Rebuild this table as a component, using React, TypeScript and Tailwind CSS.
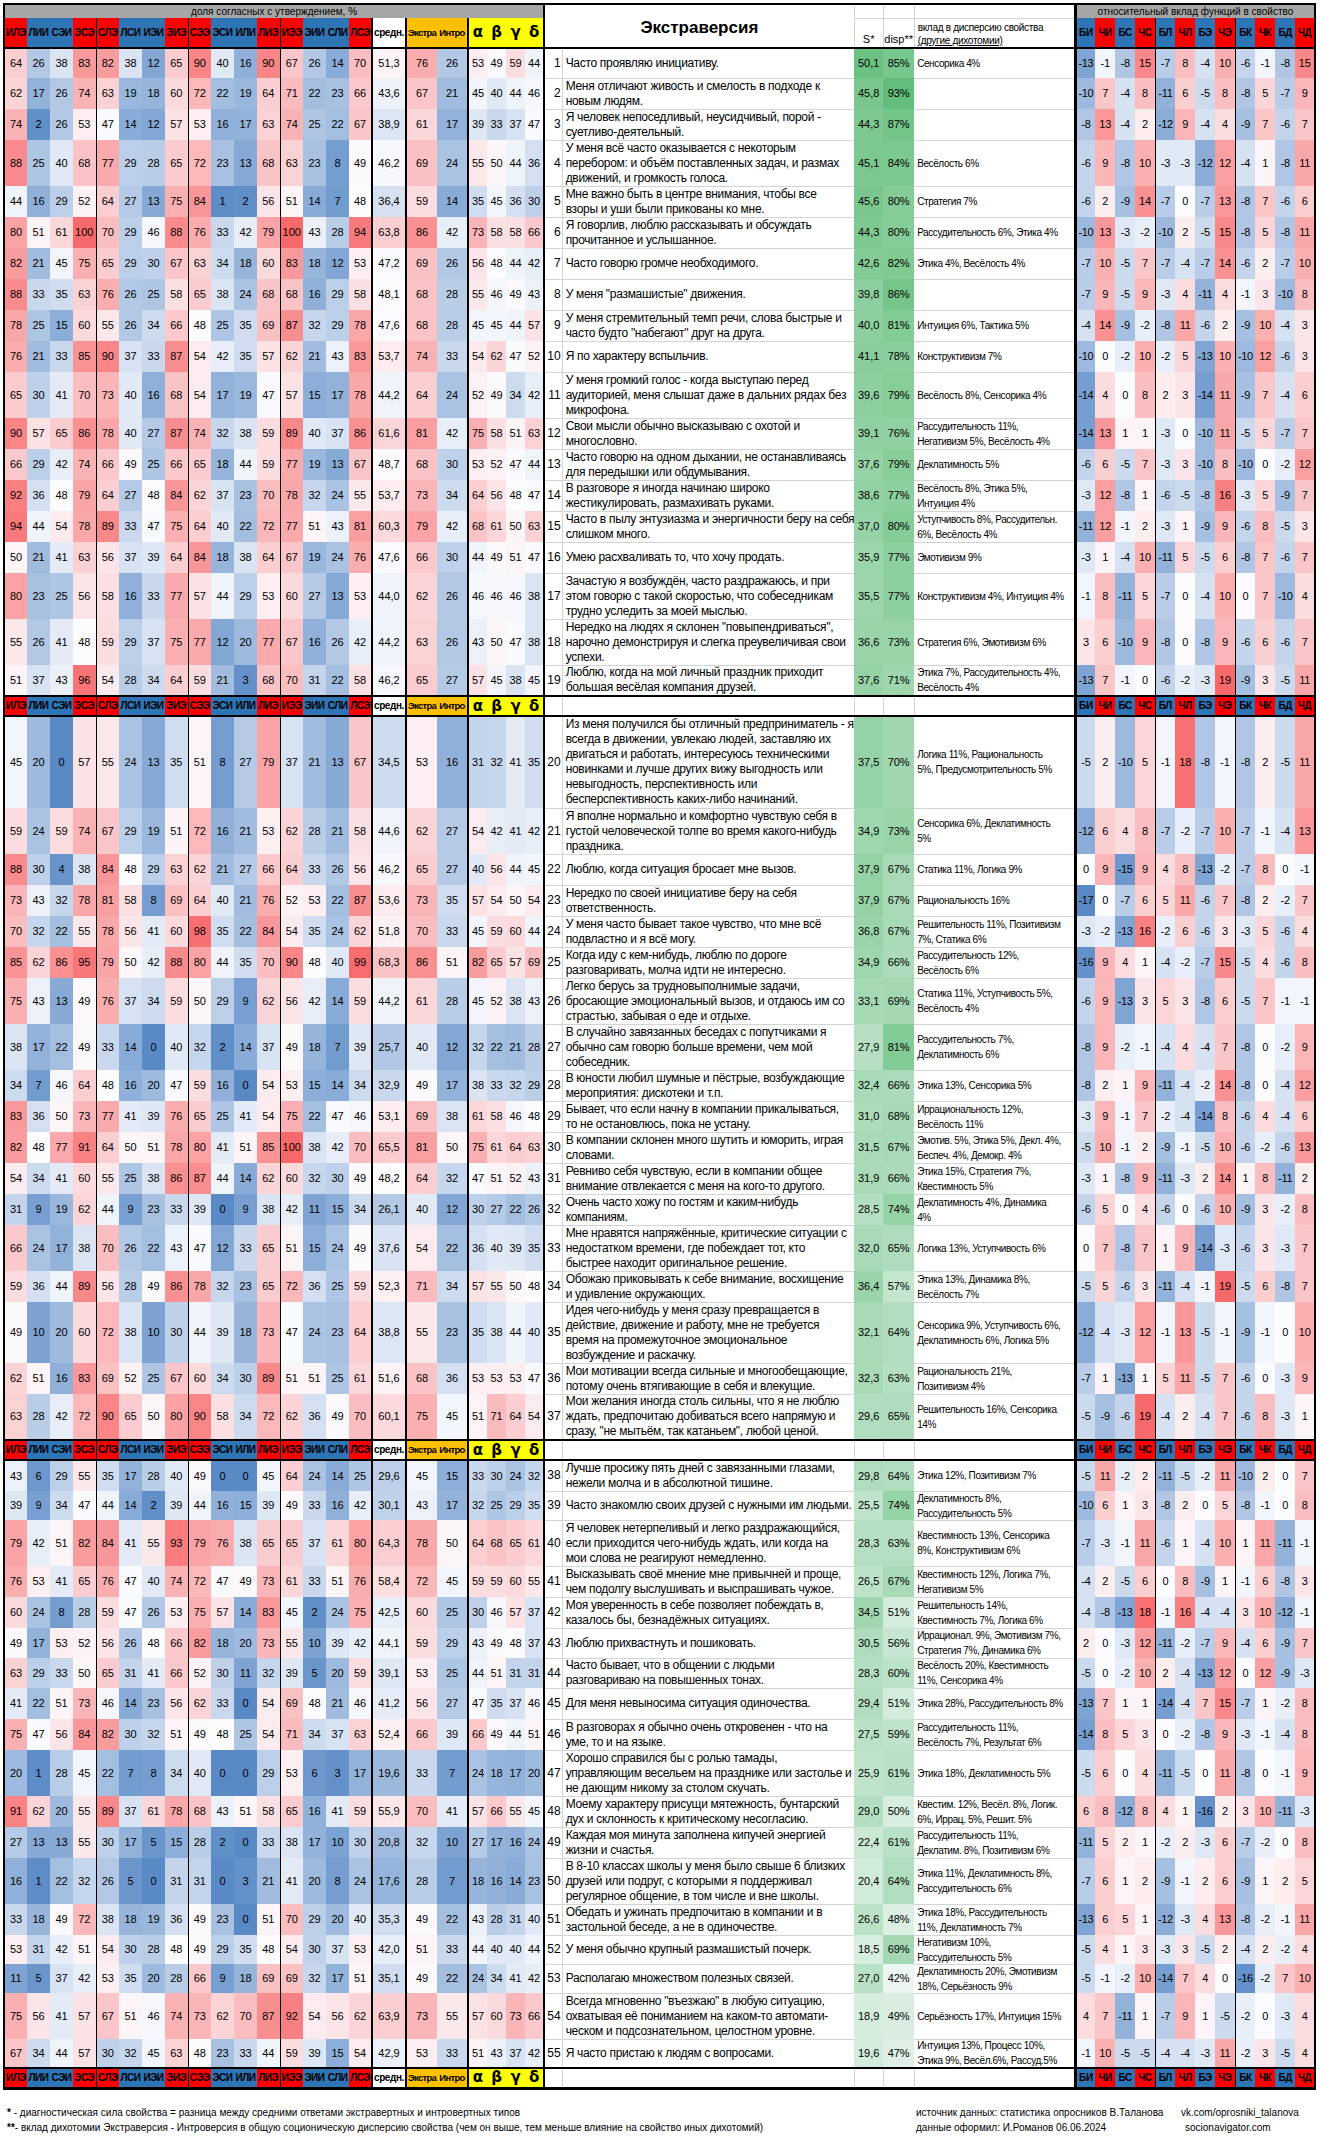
import React from 'react';

type Row = [number, string, string, string, string, string, string, string?];

const S1: Row[] = [
  [1, '64 26 38 83 82 38 12 65 90 40 16 90 67 26 14 70 51,3 76 26 53 49 59 44', 'Часто проявляю инициативу.', '50,1', '85%', 'Сенсорика 4%', '-13 -1 -8 15 -7 8 -4 10 -6 -1 -8 15', 'h-[30px]'],
  [2, '62 17 26 74 63 19 18 60 72 22 19 64 71 22 23 66 43,6 67 21 45 40 44 46', 'Меня отличают живость и смелость в подходе к|новым людям.', '45,8', '93%', '', '-10 7 -4 8 -11 6 -5 8 -8 5 -7 9'],
  [3, '74 2 26 53 47 14 12 57 53 16 17 63 74 25 22 67 38,9 61 17 39 33 37 47', 'Я человек непоседливый, неусидчивый, порой -|суетливо-деятельный.', '44,3', '87%', '', '-8 13 -4 2 -12 9 -4 4 -9 7 -6 7'],
  [4, '88 25 40 68 77 29 28 65 72 23 13 68 63 23 8 49 46,2 69 24 55 50 44 36', 'У меня всё часто оказывается с некоторым|перебором: и объём поставленных задач, и размах|движений, и громкость голоса.', '45,1', '84%', 'Весёлость 6%', '-6 9 -8 10 -3 -3 -12 12 -4 1 -8 11'],
  [5, '44 16 29 52 64 27 13 75 84 1 2 56 51 14 7 48 36,4 59 14 35 45 36 30', 'Мне важно быть в центре внимания, чтобы все|взоры и уши были прикованы ко мне.', '45,6', '80%', 'Стратегия 7%', '-6 2 -9 14 -7 0 -7 13 -8 7 -6 6'],
  [6, '80 51 61 100 70 29 46 88 76 33 42 79 100 43 28 94 63,8 86 42 73 58 58 66', 'Я говорлив, люблю рассказывать и обсуждать|прочитанное и услышанное.', '44,3', '80%', 'Рассудительность 6%, Этика 4%', '-10 13 -3 -2 -10 2 -5 15 -8 5 -8 11'],
  [7, '82 21 45 75 65 29 30 67 63 34 18 60 83 18 12 53 47,2 69 26 56 48 44 42', 'Часто говорю громче необходимого.', '42,6', '82%', 'Этика 4%, Весёлость 4%', '-7 10 -5 7 -7 -4 -7 14 -6 2 -7 10'],
  [8, '88 33 35 63 76 26 25 58 65 38 24 68 68 16 29 58 48,1 68 28 55 46 49 43', 'У меня "размашистые" движения.', '39,8', '86%', '', '-7 9 -5 9 -3 4 -11 4 -1 3 -10 8'],
  [9, '78 25 15 60 55 26 34 66 48 25 35 69 87 32 29 78 47,6 68 28 45 45 44 57', 'У меня стремительный темп речи, слова быстрые и|часто будто "набегают" друг на друга.', '40,0', '81%', 'Интуиция 6%, Тактика 5%', '-4 14 -9 -2 -8 11 -6 2 -9 10 -4 3'],
  [10, '76 21 33 85 90 37 33 87 54 42 35 57 62 21 43 83 53,7 74 33 54 62 47 52', 'Я по характеру вспыльчив.', '41,1', '78%', 'Конструктивизм 7%', '-10 0 -2 10 -2 5 -13 10 -10 12 -6 3'],
  [11, '65 30 41 70 73 40 16 68 54 17 19 47 57 15 17 78 44,2 64 24 52 49 34 42', 'У меня громкий голос - когда выступаю перед|аудиторией, меня слышат даже в дальних рядах без|микрофона.', '39,6', '79%', 'Весёлость 8%, Сенсорика 4%', '-14 4 0 8 2 3 -14 11 -9 7 -4 6'],
  [12, '90 57 65 86 78 40 27 87 74 32 38 59 89 40 37 86 61,6 81 42 75 58 51 63', 'Свои мысли обычно высказываю с охотой и|многословно.', '39,1', '76%', 'Рассудительность 11%,|Негативизм 5%, Весёлость 4%', '-14 13 1 1 -3 0 -10 11 -5 5 -7 7'],
  [13, '66 29 42 74 66 49 25 66 65 18 44 59 77 19 13 67 48,7 68 30 53 52 47 44', 'Часто говорю на одном дыхании, не останавливаясь|для передышки или обдумывания.', '37,6', '79%', 'Деклатимность 5%', '-6 6 -5 7 -3 3 -10 8 -10 0 -2 12'],
  [14, '92 36 48 79 64 27 48 84 62 37 23 70 78 32 24 55 53,7 73 34 64 56 48 47', 'В разговоре я иногда начинаю широко|жестикулировать, размахивать руками.', '38,6', '77%', 'Весёлость 8%, Этика 5%,|Интуиция 4%', '-3 12 -8 1 -6 -5 -8 16 -3 5 -9 7'],
  [15, '94 44 54 78 89 33 47 75 64 40 22 72 77 51 43 81 60,3 79 42 68 61 50 63', 'Часто в пылу энтузиазма и энергичности беру на себя|слишком много.', '37,0', '80%', 'Уступчивость 8%, Рассудительн.|6%, Весёлость 4%', '-11 12 -1 2 -3 1 -9 9 -6 8 -5 3'],
  [16, '50 21 41 63 56 37 39 64 84 18 38 64 67 19 24 76 47,6 66 30 44 49 51 47', 'Умею расхваливать то, что хочу продать.', '35,9', '77%', 'Эмотивизм 9%', '-3 1 -4 10 -11 5 -5 6 -8 7 -6 7'],
  [17, '80 23 25 56 58 16 33 77 57 44 29 53 60 27 13 53 44,0 62 26 46 46 46 38', 'Зачастую я возбуждён, часто раздражаюсь, и при|этом говорю с такой скоростью, что собеседникам|трудно уследить за моей мыслью.', '35,5', '77%', 'Конструктивизм 4%, Интуиция 4%', '-1 8 -11 5 -7 0 -4 10 0 7 -10 4'],
  [18, '55 26 41 48 59 29 37 75 77 12 20 77 67 16 26 42 44,2 63 26 43 50 47 38', 'Нередко на людях я склонен "повыпендриваться",|нарочно демонстрируя и слегка преувеличивая свои|успехи.', '36,6', '73%', 'Стратегия 6%, Эмотивизм 6%', '3 6 -10 9 -8 0 -8 9 -6 6 -6 7'],
  [19, '51 37 43 96 54 28 34 64 59 21 3 68 70 31 22 58 46,2 65 27 57 45 38 45', 'Люблю, когда на мой личный праздник приходит|большая весёлая компания друзей.', '37,6', '71%', 'Этика 7%, Рассудительность 4%,|Весёлость 4%', '-13 7 -1 0 -6 -2 -3 19 -9 3 -5 11'],
];

const S2: Row[] = [
  [20, '45 20 0 57 55 24 13 35 51 8 27 79 37 21 13 67 34,5 53 16 31 32 41 35', 'Из меня получился бы отличный предприниматель - я|всегда в движении, увлекаю людей, заставляю их|двигаться и работать, интересуюсь техническими|новинками и лучше других вижу выгодность или|невыгодность, перспективность или|бесперспективность каких-либо начинаний.', '37,5', '70%', 'Логика 11%, Рациональность|5%, Предусмотрительность 5%', '-5 2 -10 5 -1 18 -8 -1 -8 2 -5 11'],
  [21, '59 24 59 74 67 29 19 51 72 16 21 53 62 28 21 58 44,6 62 27 54 42 41 42', 'Я вполне нормально и комфортно чувствую себя в|густой человеческой толпе во время какого-нибудь|праздника.', '34,9', '73%', 'Сенсорика 6%, Деклатимность|5%', '-12 6 4 8 -7 -2 -7 10 -7 -1 -4 13'],
  [22, '88 30 4 38 84 48 29 63 62 21 27 66 64 33 26 56 46,2 65 27 40 56 44 45', 'Люблю, когда ситуация бросает мне вызов.', '37,9', '67%', 'Статика 11%, Логика 9%', '0 9 -15 9 4 8 -13 -2 -7 8 0 -1'],
  [23, '73 43 32 78 81 58 8 69 64 40 21 76 52 53 22 87 53,6 73 35 57 54 50 54', 'Нередко по своей инициативе беру на себя|ответственность.', '37,9', '67%', 'Рациональность 16%', '-17 0 -7 6 5 11 -6 7 -8 2 -2 7'],
  [24, '70 32 22 55 78 56 41 60 98 35 22 84 54 35 24 62 51,8 70 33 45 59 60 44', 'У меня часто бывает такое чувство, что мне всё|подвластно и я всё могу.', '36,8', '67%', 'Решительность 11%, Позитивизм|7%, Статика 6%', '-3 -2 -13 16 -2 6 -6 3 -3 5 -6 4'],
  [25, '85 62 86 95 79 50 42 88 80 44 35 70 90 48 40 99 68,3 86 51 82 65 57 69', 'Когда иду с кем-нибудь, люблю по дороге|разговаривать, молча идти не интересно.', '34,9', '66%', 'Рассудительность 12%,|Весёлость 6%', '-16 9 4 1 -4 -2 -7 15 -5 4 -6 8'],
  [26, '75 43 13 49 76 37 34 59 50 29 9 62 56 42 14 59 44,2 61 28 45 52 38 43', 'Легко берусь за трудновыполнимые задачи,|бросающие эмоциональный вызов, и отдаюсь им со|страстью, забывая о еде и отдыхе.', '33,1', '69%', 'Статика 11%, Уступчивость 5%,|Весёлость 4%', '-6 9 -13 3 5 3 -8 6 -5 7 -1 -1'],
  [27, '38 17 22 49 33 14 0 40 32 2 14 37 49 18 7 39 25,7 40 12 32 22 21 28', 'В случайно завязанных беседах с попутчиками я|обычно сам говорю больше времени, чем мой|собеседник.', '27,9', '81%', 'Рассудительность 7%,|Деклатимность 6%', '-8 9 -2 -1 -4 4 -4 7 -8 0 -2 9'],
  [28, '34 7 46 64 48 16 20 47 59 16 0 54 53 15 14 34 32,9 49 17 38 33 32 29', 'В юности любил шумные и пёстрые, возбуждающие|мероприятия: дискотеки и т.п.', '32,4', '66%', 'Этика 13%, Сенсорика 5%', '-8 2 1 9 -11 -4 -2 14 -8 0 -4 12'],
  [29, '83 36 50 73 77 41 39 76 65 25 41 54 75 22 47 46 53,1 69 38 61 58 46 48', 'Бывает, что если начну в компании прикалываться,|то не остановлюсь, пока не устану.', '31,0', '68%', 'Иррациональность 12%,|Весёлость 11%', '-3 9 -1 7 -2 -4 -14 8 -6 4 -4 6'],
  [30, '82 48 77 91 64 50 51 78 80 41 51 85 100 38 42 70 65,5 81 50 75 61 64 63', 'В компании склонен много шутить и юморить, играя|словами.', '31,5', '67%', 'Эмотив. 5%, Этика 5%, Декл. 4%,|Беспеч. 4%, Демокр. 4%', '-5 10 -1 2 -9 -1 -5 10 -6 -2 -6 13'],
  [31, '54 34 41 60 55 25 38 86 87 44 14 62 60 32 30 49 48,2 64 32 47 51 52 43', 'Ревниво себя чувствую, если в компании общее|внимание отвлекается с меня на кого-то другого.', '31,9', '66%', 'Этика 15%, Стратегия 7%,|Квестимность 5%', '-3 1 -8 9 -11 -3 2 14 1 8 -11 2'],
  [32, '31 9 19 62 44 9 23 33 39 0 9 38 42 11 15 34 26,1 40 12 30 27 22 26', 'Очень часто хожу по гостям и каким-нибудь|компаниям.', '28,5', '74%', 'Деклатимность 4%, Динамика|4%', '-6 5 0 4 -6 0 -6 10 -9 3 -2 8'],
  [33, '66 24 17 38 70 26 22 43 47 12 33 65 51 15 24 49 37,6 54 22 36 40 39 35', 'Мне нравятся напряжённые, критические ситуации с|недостатком времени, где побеждает тот, кто|быстрее находит оригинальное решение.', '32,0', '65%', 'Логика 13%, Уступчивость 6%', '0 7 -8 7 1 9 -14 -3 -6 3 -3 7'],
  [34, '59 36 44 89 56 28 49 86 78 32 23 65 72 36 25 59 52,3 71 34 57 55 50 48', 'Обожаю приковывать к себе внимание, восхищение|и удивление окружающих.', '36,4', '57%', 'Этика 13%, Динамика 8%,|Весёлость 7%', '-5 5 -6 3 -11 -4 -1 19 -5 6 -8 7'],
  [35, '49 10 20 60 72 38 10 30 44 39 18 73 47 24 23 64 38,8 55 23 35 38 44 40', 'Идея чего-нибудь у меня сразу превращается в|действие, движение и работу, мне не требуется|время на промежуточное эмоциональное|возбуждение и раскачку.', '32,1', '64%', 'Сенсорика 9%, Уступчивость 6%,|Деклатимность 6%, Логика 5%', '-12 -4 -3 12 -1 13 -5 -1 -9 -1 0 10'],
  [36, '62 51 16 83 69 52 25 67 60 34 30 89 51 51 25 61 51,6 68 36 53 53 53 47', 'Мои мотивации всегда сильные и многообещающие,|потому очень втягивающие в себя и влекущие.', '32,3', '63%', 'Рациональность 21%,|Позитивизм 4%', '-7 1 -13 1 5 11 -5 7 -6 0 -3 9'],
  [37, '63 28 42 72 90 65 50 80 90 58 34 72 62 36 49 70 60,1 75 45 51 71 64 54', 'Мои желания иногда столь сильны, что я не люблю|ждать, предпочитаю добиваться всего напрямую и|сразу, "не мытьём, так катаньем", любой ценой.', '29,6', '65%', 'Решительность 16%, Сенсорика|14%', '-5 -9 -6 19 -4 2 -4 7 -6 8 -3 1'],
];

const S3: Row[] = [
  [38, '43 6 29 55 35 17 28 40 49 0 0 45 64 24 14 25 29,6 45 15 33 30 24 32', 'Лучше просижу пять дней с завязанными глазами,|нежели молча и в абсолютной тишине.', '29,8', '64%', 'Этика 12%, Позитивизм 7%', '-5 11 -2 2 -11 -5 -2 11 -10 2 0 7', 'h-[31px]'],
  [39, '39 9 34 47 44 14 2 39 44 16 15 39 49 33 16 42 30,1 43 17 32 25 29 35', 'Часто знакомлю своих друзей с нужными им людьми.', '25,5', '74%', 'Деклатимность 8%,|Рассудительность 5%', '-10 6 1 3 -8 2 0 5 -8 -1 0 8', 'h-[29px]'],
  [40, '79 42 51 82 84 41 55 93 79 76 38 65 65 37 61 80 64,3 78 50 64 68 65 61', 'Я человек нетерпеливый и легко раздражающийся,|если приходится чего-нибудь ждать, или когда на|мои слова не реагируют немедленно.', '28,3', '63%', 'Квестимность 13%, Сенсорика|8%, Конструктивизм 6%', '-7 -3 -1 11 -6 1 -4 10 1 11 -11 -1', 'h-[46px]'],
  [41, '76 53 41 65 76 47 40 74 72 47 49 73 61 33 51 76 58,4 72 45 59 59 60 55', 'Высказывать своё мнение мне привычней и проще,|чем подолгу выслушивать и выспрашивать чужое.', '26,5', '67%', 'Квестимность 12%, Логика 7%,|Негативизм 5%', '-4 2 -5 6 0 8 -9 1 -1 6 -8 3', 'h-[31px]'],
  [42, '60 24 8 28 59 47 26 53 75 57 14 83 45 2 24 75 42,5 60 25 30 46 57 37', 'Моя уверенность в себе позволяет побеждать в,|казалось бы, безнадёжных ситуациях.', '34,5', '51%', 'Решительность 14%,|Квестимность 7%, Логика 6%', '-4 -8 -13 18 -1 16 -4 -4 3 10 -12 -1', 'h-[31px]'],
  [43, '49 17 53 52 56 26 48 66 82 18 20 73 55 10 39 42 44,1 59 29 43 49 48 37', 'Люблю прихвастнуть и пошиковать.', '30,5', '56%', 'Иррационал. 9%, Эмотивизм 7%,|Стратегия 7%, Динамика 6%', '2 0 -3 12 -11 -2 -7 9 -4 6 -9 7', 'h-[30px]'],
  [44, '63 29 33 50 65 31 41 66 52 30 11 32 39 5 20 59 39,1 53 25 44 51 31 31', 'Часто бывает, что в общении с людьми|разговариваю на повышенных тонах.', '28,3', '60%', 'Весёлость 20%, Квестимность|11%, Сенсорика 4%', '-5 0 -2 10 2 -4 -13 12 0 12 -9 -3', 'h-[30px]'],
  [45, '41 22 51 73 46 14 23 56 62 33 0 54 69 48 21 46 41,2 56 27 47 35 37 46', 'Для меня невыносима ситуация одиночества.', '29,4', '51%', 'Этика 28%, Рассудительность 8%', '-13 7 1 1 -14 -4 7 15 -7 1 -2 8', 'h-[31px]'],
  [46, '75 47 56 84 82 30 32 51 49 48 25 54 71 34 37 63 52,4 66 39 66 49 44 51', 'В разговорах я обычно очень откровенен - что на|уме, то и на языке.', '27,5', '59%', 'Рассудительность 11%,|Весёлость 7%, Результат 6%', '-14 8 5 3 0 -2 -8 9 -3 -1 -4 8', 'h-[31px]'],
  [47, '20 1 28 45 22 7 8 34 40 0 0 29 53 6 3 17 19,6 33 7 24 18 17 20', 'Хорошо справился бы с ролью тамады,|управляющим весельем на празднике или застолье и|не дающим никому за столом скучать.', '25,9', '61%', 'Этика 18%, Деклатимность 5%', '-5 6 0 4 -11 -5 0 11 -8 0 -1 9', 'h-[46px]'],
  [48, '91 62 20 55 89 37 61 78 68 43 51 58 65 16 41 59 55,9 70 41 57 66 55 45', 'Моему характеру присущи мятежность, бунтарский|дух и склонность к критическому несогласию.', '29,0', '50%', 'Квестим. 12%, Весёл. 8%, Логик.|6%, Иррац. 5%, Решит. 5%', '6 8 -12 8 4 1 -16 2 3 10 -11 -3', 'h-[31px]'],
  [49, '27 13 13 55 30 17 5 15 28 2 0 33 38 17 10 30 20,8 32 10 27 17 16 24', 'Каждая моя минута заполнена кипучей энергией|жизни и счастья.', '22,4', '61%', 'Рассудительность 11%,|Деклатим. 8%, Позитивизм 6%', '-11 5 2 1 -2 2 -3 6 -7 -2 0 8', 'h-[31px]'],
  [50, '16 1 22 32 26 5 0 31 31 0 3 21 41 20 8 24 17,6 28 7 18 16 14 23', 'В 8-10 классах школы у меня было свыше 6 близких|друзей или подруг, с которыми я поддерживал|регулярное общение, в том числе и вне школы.', '20,4', '64%', 'Этика 11%, Деклатимность 8%,|Рассудительность 6%', '-7 6 1 2 -9 -1 2 6 -9 1 2 5', 'h-[46px]'],
  [51, '33 18 49 72 38 18 19 36 49 23 0 51 70 29 20 40 35,3 49 22 43 28 31 40', 'Обедать и ужинать предпочитаю в компании и в|застольной беседе, а не в одиночестве.', '26,6', '48%', 'Этика 18%, Рассудительность|11%, Деклатимность 7%', '-13 6 5 1 -12 -3 4 13 -8 -2 -1 11', 'h-[31px]'],
  [52, '53 31 42 51 54 30 28 48 49 29 35 48 54 30 37 53 42,0 51 33 44 40 40 44', 'У меня обычно крупный размашистый почерк.', '18,5', '69%', 'Негативизм 10%,|Рассудительность 5%', '-5 4 1 3 -3 3 -5 2 -4 2 -2 4', 'h-[29px]'],
  [53, '11 5 37 42 53 35 20 28 66 9 18 69 69 32 17 51 35,1 49 22 24 34 41 42', 'Располагаю множеством полезных связей.', '27,0', '42%', 'Деклатимность 20%, Эмотивизм|18%, Серьёзность 9%', '-5 -1 -2 10 -14 7 4 0 -16 -2 7 10', 'h-[29px]'],
  [54, '75 56 41 57 67 51 46 74 73 62 70 87 92 54 56 62 63,9 73 55 57 60 73 66', 'Всегда мгновенно "въезжаю" в любую ситуацию,|охватывая её пониманием на каком-то автомати-|ческом и подсознательном, целостном уровне.', '18,9', '49%', 'Серьёзность 17%, Интуиция 15%', '4 7 -11 1 -7 9 1 -5 -2 0 -3 4', 'h-[46px]'],
  [55, '67 34 44 57 30 32 45 63 48 23 33 44 59 39 15 54 42,9 53 33 51 43 37 42', 'Я часто пристаю к людям с вопросами.', '19,6', '47%', 'Интуиция 13%, Процесс 10%,|Этика 9%, Весёл.6%, Рассуд.5%', '-1 10 -5 -5 -4 -4 -3 11 -2 3 -5 4', 'h-[29px]'],
];

const TYPES = ['ИЛЭ', 'ЛИИ', 'СЭИ', 'ЭСЭ', 'СЛЭ', 'ЛСИ', 'ИЭИ', 'ЭИЭ', 'СЭЭ', 'ЭСИ', 'ИЛИ', 'ЛИЭ', 'ИЭЭ', 'ЭИИ', 'СЛИ', 'ЛСЭ'];
const RED_TYPES = new Set([0, 3, 4, 7, 8, 11, 12, 15]);
const FUNCS = ['БИ', 'ЧИ', 'БС', 'ЧС', 'БЛ', 'ЧЛ', 'БЭ', 'ЧЭ', 'БК', 'ЧК', 'БД', 'ЧД'];

const LCLS = [
  'border-l-2 border-l-black', '', '', 'border-r border-r-black',
  '', '', '', 'border-r border-r-black',
  '', '', '', 'border-r border-r-black',
  '', '', '', 'border-r-2 border-r-black',
  'border-r-2 border-r-black', '', 'border-r-2 border-r-black',
  '', '', '', 'border-r-2 border-r-black',
];
const RCLS = [
  '', '', '', 'border-r border-r-black',
  '', '', '', 'border-r border-r-black',
  '', '', '', 'border-r-2 border-r-black',
];

const WHITE = [252, 252, 255];
const RED = [248, 105, 107];
const BLUE = [90, 138, 198];
const GREEN = [99, 190, 123];

function lerp(a: number[], b: number[], t: number) {
  const tt = Math.max(0, Math.min(1, t));
  return `rgb(${a.map((x, i) => Math.round(x + (b[i] - x) * tt)).join(',')})`;
}
function num(s: string) {
  return parseFloat(s.replace(',', '.').replace('%', ''));
}
function heat(v: number, min: number, mid: number, max: number) {
  if (v >= mid) return lerp(WHITE, RED, (v - mid) / (max - mid));
  return lerp(WHITE, BLUE, (mid - v) / (mid - min));
}

const HCLS: Record<number, string> = { 1: 'h-[31px]', 2: 'h-[31px]', 3: 'h-[46px]', 4: 'h-[61px]', 5: 'h-[77px]', 6: 'h-[92px]' };

const GRAY_B = 'border-b border-b-[#d4d4d4]';

function TypeCells({ extra }: { extra: string }) {
  return (
    <>
      {TYPES.map((t, i) => (
        <td
          key={t}
          className={`${LCLS[i]} ${extra} ${RED_TYPES.has(i) ? 'bg-[#ff0000]' : 'bg-[#2e75b6]'} p-0 text-center text-[10px] leading-[12px] font-bold tracking-[-0.5px] text-black overflow-hidden whitespace-nowrap`}
        >
          {t}
        </td>
      ))}
      <td className={`${LCLS[16]} ${extra} bg-white p-0 text-center text-[10px] leading-[12px] font-bold tracking-[-0.4px] whitespace-nowrap overflow-hidden`}>средн.</td>
      <td className={`${extra} bg-[#ffc000] p-0 text-center text-[9.5px] leading-[12px] font-bold tracking-[-0.7px] whitespace-nowrap overflow-hidden`}>Экстра</td>
      <td className={`${LCLS[18]} ${extra} bg-[#ffc000] p-0 text-center text-[9.5px] leading-[12px] font-bold tracking-[-0.7px] whitespace-nowrap overflow-hidden`}>Интро</td>
      {['α', 'β', 'γ', 'δ'].map((g, i) => (
        <td key={g} className={`${LCLS[19 + i]} ${extra} bg-[#ffff00] p-0 text-center text-[15px] leading-[15px] font-bold font-['DejaVu_Sans',sans-serif]`}>
          {g}
        </td>
      ))}
    </>
  );
}

function FuncCells({ extra }: { extra: string }) {
  return (
    <>
      {FUNCS.map((f, i) => (
        <td
          key={f}
          className={`${RCLS[i]} ${extra} ${i % 2 === 0 ? 'bg-[#2e75b6]' : 'bg-[#ff0000]'} p-0 text-center text-[10px] leading-[12px] font-bold tracking-[-0.4px] text-black whitespace-nowrap overflow-hidden`}
        >
          {f}
        </td>
      ))}
    </>
  );
}

function MidHeader({ last }: { last?: boolean }) {
  const ex = last ? 'border-t-2 border-t-black border-b-[3px] border-b-black' : 'border-y-2 border-y-black';
  return (
    <tr className="h-[20px]">
      <TypeCells extra={ex} />
      <td className={`${ex} border-r border-r-[#d4d4d4] bg-white`}></td>
      <td className={`${ex} border-r border-r-[#d4d4d4] bg-white`}></td>
      <td className={`${ex} border-r border-r-[#d4d4d4] bg-white`}></td>
      <td className={`${ex} border-r border-r-[#d4d4d4] bg-white`}></td>
      <td className={`${ex} border-r-[3px] border-r-black bg-white`}></td>
      <FuncCells extra={ex} />
    </tr>
  );
}

function DataRow({ r }: { r: Row }) {
  const [n, left, text, s, disp, contrib, right, hc] = r;
  const lv = left.split(' ');
  const rv = right.split(' ');
  const tl = text.split('|');
  const cl = contrib ? contrib.split('|') : [];
  const h = hc ?? HCLS[Math.max(tl.length, cl.length, 1)];
  return (
    <tr className={h}>
      {lv.map((v, i) => (
        <td
          key={i}
          className={`${LCLS[i]} p-0 text-center text-[11px] leading-[13px] whitespace-nowrap`}
          style={{ backgroundColor: heat(num(v), 0, 48, 100) }}
        >
          {v}
        </td>
      ))}
      <td className={`${GRAY_B} border-r border-r-[#d4d4d4] p-0 pr-[1px] text-right text-[12px] leading-[13px]`}>{n}</td>
      <td className={`${GRAY_B} p-0 pl-[3px] text-left text-[12px] leading-[15px] tracking-[-0.3px] whitespace-nowrap overflow-visible`}>
        <div className="h-0 flex flex-col justify-center">
          {tl.map((l, i) => (
            <div key={i}>{l}</div>
          ))}
        </div>
      </td>
      <td className="p-0 text-center text-[11px] leading-[13px] whitespace-nowrap" style={{ backgroundColor: lerp(WHITE, GREEN, (num(s) - 8) / 44) }}>
        {s}
      </td>
      <td className="p-0 text-center text-[11px] leading-[13px] whitespace-nowrap" style={{ backgroundColor: lerp(WHITE, GREEN, (num(disp) - 36) / 57) }}>
        {disp}
      </td>
      <td className={`${GRAY_B} border-r-[3px] border-r-black p-0 pl-[3px] text-left text-[10px] leading-[15px] tracking-[-0.4px] whitespace-nowrap overflow-visible`}>
        <div className="h-0 flex flex-col justify-center">
          {cl.map((l, i) => (
            <div key={i}>{l}</div>
          ))}
        </div>
      </td>
      {rv.map((v, i) => (
        <td
          key={i}
          className={`${RCLS[i]} p-0 text-center text-[11px] leading-[13px] tracking-[-0.3px] whitespace-nowrap`}
          style={{ backgroundColor: heat(num(v), -17, 0, 19) }}
        >
          {v}
        </td>
      ))}
    </tr>
  );
}

export default function App() {
  return (
    <div className="w-[1321px] min-h-[2151px] bg-white pt-[3px] pl-[3px] text-black font-['Liberation_Sans',Arial,sans-serif]">
      <table className="table-fixed border-collapse w-[1313px]">
        <colgroup>
          {TYPES.map((t) => (
            <col key={t} className="w-[23px]" />
          ))}
          <col className="w-[34px]" />
          <col className="w-[31px]" />
          <col className="w-[31px]" />
          <col className="w-[19px]" />
          <col className="w-[19px]" />
          <col className="w-[19px]" />
          <col className="w-[19px]" />
          <col className="w-[18px]" />
          <col className="w-[292px]" />
          <col className="w-[29px]" />
          <col className="w-[31px]" />
          <col className="w-[161px]" />
          {FUNCS.map((f) => (
            <col key={f} className="w-[20px]" />
          ))}
        </colgroup>
        <tbody>
          <tr className="h-[14px]">
            <td colSpan={23} className="border-t-2 border-t-black border-l-2 border-l-black border-r-2 border-r-black bg-[#a6a6a6] p-0 text-center text-[10px] leading-[12px]">
              доля согласных с утверждением, %
            </td>
            <td colSpan={2} rowSpan={2} className="border-t-2 border-t-black border-b-2 border-b-black border-r border-r-[#d4d4d4] p-0 pt-[4px] text-center text-[17px] leading-[20px] font-bold">
              Экстраверсия
            </td>
            <td className="border-t-2 border-t-black border-r border-r-[#d4d4d4] border-b border-b-[#d4d4d4] p-0"></td>
            <td className="border-t-2 border-t-black border-r border-r-[#d4d4d4] border-b border-b-[#d4d4d4] p-0"></td>
            <td className="border-t-2 border-t-black border-r-[3px] border-r-black border-b border-b-[#d4d4d4] p-0"></td>
            <td colSpan={12} className="border-t-2 border-t-black border-r-2 border-r-black bg-[#a6a6a6] p-0 text-center text-[10px] leading-[12px] whitespace-nowrap">
              относительный вклад функций в свойство
            </td>
          </tr>
          <tr className="h-[30px]">
            <TypeCells extra="border-b-2 border-b-black" />
            <td className="border-b-2 border-b-black border-r border-r-[#d4d4d4] p-0 pb-[1px] align-bottom text-center text-[11px] leading-[13px]">S*</td>
            <td className="border-b-2 border-b-black border-r border-r-[#d4d4d4] p-0 pb-[1px] align-bottom text-center text-[11px] leading-[13px]">disp**</td>
            <td className="border-b-2 border-b-black border-r-[3px] border-r-black p-0 pl-[3px] align-bottom text-left text-[10px] leading-[13px] tracking-[-0.3px] whitespace-nowrap">
              <div>вклад в дисперсию свойства</div>
              <div className="underline">(другие дихотомии)</div>
            </td>
            <FuncCells extra="border-b-2 border-b-black" />
          </tr>
          {S1.map((r) => (
            <DataRow key={r[0]} r={r} />
          ))}
          <MidHeader />
          {S2.map((r) => (
            <DataRow key={r[0]} r={r} />
          ))}
          <MidHeader />
          {S3.map((r) => (
            <DataRow key={r[0]} r={r} />
          ))}
          <MidHeader last />
        </tbody>
      </table>
      <div className="mt-[15px] flex text-[10px] leading-[15px] whitespace-nowrap">
        <div className="w-[913px] pl-[4px]">
          <div>
            <b>*</b> - диагностическая сила свойства = разница между средними ответами экстравертных и интровертных типов
          </div>
          <div>
            <b>**</b>- вклад дихотомии Экстраверсия - Интроверсия в общую соционическую дисперсию свойства (чем он выше, тем меньше влияние на свойство иных дихотомий)
          </div>
        </div>
        <div className="w-[265px]">
          <div>источник данных: статистика опросников В.Таланова</div>
          <div>данные оформил: И.Романов 06.06.2024</div>
        </div>
        <div>
          <div>vk.com/oprosniki_talanova</div>
          <div className="pl-[4px]">socionavigator.com</div>
        </div>
      </div>
    </div>
  );
}
